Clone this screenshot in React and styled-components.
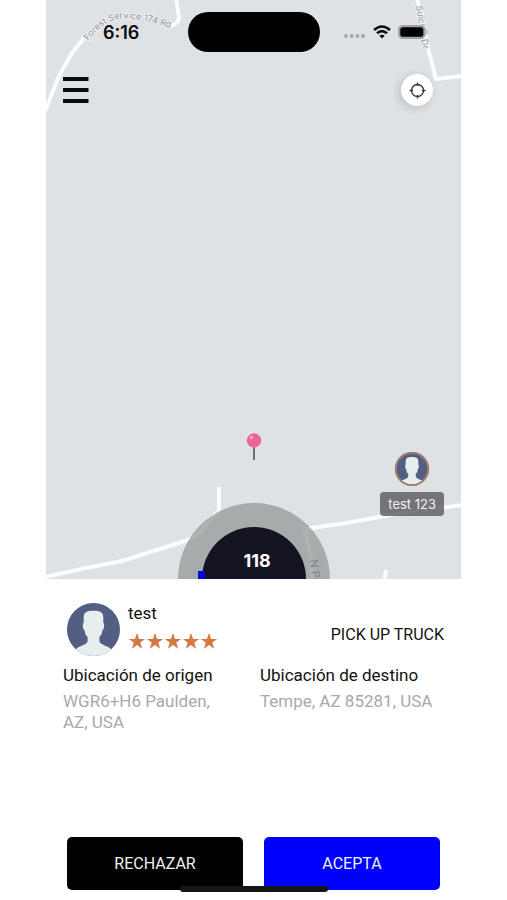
import React from 'react';
import styled, { createGlobalStyle } from 'styled-components';

const GlobalStyle = createGlobalStyle`
  * {
    box-sizing: border-box;
  }

  body {
    margin: 0;
    background-color: #fff;
    font-family: Roboto, 'Liberation Sans', sans-serif;
  }
`;

const Page = styled.main`
  display: flex;
  flex-direction: column;
  position: relative;
  min-height: 100vh;
  padding: 0 46px;
`;

const Map = styled.section`
  position: relative;
  flex: 1;
  overflow: hidden;
  background-color: #dee2e5;
`;

const Roads = styled.svg`
  position: absolute;
  inset: 0;
  width: 100%;
  height: 100%;
`;

const StatusBar = styled.div`
  position: relative;
  display: grid;
  grid-template-columns: 1fr 132px 1fr;
  align-items: center;
  padding-top: 12px;
`;

const Time = styled.div`
  padding-left: 57px;
  font-family: Inter, sans-serif;
  font-size: 18px;
  font-weight: 600;
  color: #0b0c10;
`;

const Island = styled.div`
  height: 40px;
  border-radius: 20px;
  background-color: #000;
`;

const StatusIcons = styled.div`
  display: flex;
  align-items: center;
  justify-content: flex-end;
  gap: 7px;
  padding-right: 32px;
`;

const TopBar = styled.div`
  position: relative;
  display: flex;
  align-items: center;
  justify-content: space-between;
  padding: 22px 28px 0 16px;
`;

const IconButton = styled.button`
  display: flex;
  align-items: center;
  justify-content: center;
  padding: 0;
  border: none;
  background: none;
  cursor: pointer;
`;

const LocateButton = styled(IconButton)`
  width: 32px;
  height: 32px;
  border-radius: 50%;
  background-color: #fff;
  box-shadow: -2px 2px 8px rgba(0, 0, 0, 0.16);
`;

const Pin = styled.svg`
  position: absolute;
  left: 50%;
  bottom: 118px;
  transform: translateX(-50%);
`;

const Driver = styled.div`
  position: absolute;
  right: 17px;
  bottom: 63px;
  display: flex;
  flex-direction: column;
  align-items: center;
  gap: 6px;
`;

const DriverLabel = styled.div`
  padding: 0 8px;
  border-radius: 4px;
  background-color: rgba(90, 92, 94, 0.82);
  color: #f1f1f1;
  font-family: Inter, sans-serif;
  font-size: 13px;
  line-height: 24px;
`;

const Dial = styled.div`
  position: absolute;
  left: 50%;
  bottom: -76px;
  width: 152px;
  height: 152px;
  padding: 24px;
  border-radius: 50%;
  background-color: rgba(146, 149, 150, 0.72);
  transform: translateX(-50%);
`;

const DialFace = styled.div`
  height: 100%;
  padding: 22px 0 0 7px;
  border-radius: 50%;
  background-color: #141321;
  color: #fff;
  font-family: Inter, sans-serif;
  font-size: 18px;
  font-weight: 700;
  line-height: 24px;
  text-align: center;
`;

const DialMark = styled.div`
  position: absolute;
  left: 20px;
  top: 68px;
  width: 7px;
  height: 8px;
  background-color: #0707e0;
`;

const Sheet = styled.section`
  padding: 24px 17px 10px;
`;

const Rider = styled.div`
  display: flex;
  align-items: center;
  padding-left: 4px;
`;

const RiderInfo = styled.div`
  flex: 1;
  padding-left: 8px;
`;

const Name = styled.div`
  font-size: 17px;
  line-height: 21px;
  color: #111;
`;

const Stars = styled.div`
  display: flex;
  margin-top: 8px;
  padding-bottom: 6px;
`;

const Service = styled.div`
  font-size: 16px;
  line-height: 24px;
  padding-top: 10px;
  color: #111;
`;

const Places = styled.div`
  display: grid;
  grid-template-columns: 1fr 1fr;
  gap: 13px;
  margin-top: 7px;
`;

const PlaceTitle = styled.h2`
  margin: 0;
  font-size: 17px;
  font-weight: 400;
  line-height: 24px;
  color: #111;
`;

const Address = styled.p`
  margin: 4px 0 0;
  padding-right: ${({ $inset }) => $inset || 0}px;
  font-size: 17px;
  line-height: 21px;
  color: #a9a9a9;
`;

const Actions = styled.div`
  display: grid;
  grid-template-columns: 1fr 1fr;
  gap: 21px;
  margin-top: 104px;
  padding: 0 4px;
`;

const ActionButton = styled.button`
  height: 53px;
  padding: 0;
  border: none;
  border-radius: 5px;
  background-color: ${({ $color }) => $color};
  color: #f0f0f0;
  font-family: inherit;
  font-size: 16px;
  cursor: pointer;
`;

const HomeIndicator = styled.div`
  position: absolute;
  left: 50%;
  bottom: 8px;
  width: 148px;
  height: 6px;
  border-radius: 3px;
  background-color: #161616;
  transform: translateX(-50%);
`;

function Avatar({ size, ring }) {
  const id = `avatar-${size}`;
  return (
    <svg width={size} height={size} viewBox="0 0 54 54" aria-hidden="true">
      <clipPath id={id}>
        <circle cx="27" cy="27" r="27" />
      </clipPath>
      <g clipPath={`url(#${id})`}>
        <rect width="54" height="54" fill="#525f83" />
        <path
          d="M27 8C20 8 17 9.500 17 15V20C15.500 20.500 16 27 18 28C18.300 31 19 33 21 34.500V39C20 42.500 14 43.500 10 46L6 50V54H48V50L44 46C40 43.500 34 42.500 33 39V34.500C35 33 35.700 31 36 28C38 27 38.500 20.500 37 20V15C37 9.500 34 8 27 8Z"
          fill="#e7eeee"
        />
      </g>
      {ring && <circle cx="27" cy="27" r="25.500" fill="none" stroke="#a07c65" strokeWidth="3" />}
    </svg>
  );
}

function Star() {
  return (
    <svg width="18" height="18" viewBox="0 0 18 18" aria-hidden="true">
      <path d="M9 1L11.100 6.900H17.200L12.300 10.600L14.100 16.700L9 13L3.900 16.700L5.700 10.600L.8 6.900H6.900Z" fill="#d27a43" />
    </svg>
  );
}

function MapRoads() {
  return (
    <Roads viewBox="0 0 415 579" preserveAspectRatio="xMidYMax slice">
      <g fill="none" stroke="#fbfcfc" strokeWidth="4" strokeLinejoin="round">
        <path d="M-1 111L13 76L26 53L38 38" />
        <path d="M130 -2L133 18Q132 24 125 26" />
        <path d="M371 -2L375 15L383 52L390 79L417 76" />
        <path d="M-1 577L40 568L76 561L142 540Q153 536 160 524L173 510V487" />
        <path d="M259 529L300 523L355 513L417 505" />
        <path d="M259 529L265 560L267 582" />
        <path d="M338 582L340 570" />
      </g>
      <path id="forest" d="M42 41Q56 22 72 19Q92 16 132 31" fill="none" />
      <path id="suicide" d="M370 6L378 56" fill="none" />
      <path id="north" d="M264 560L269 600" fill="none" />
      <g
        fill="#919296"
        stroke="#eff1f2"
        strokeWidth="2"
        paintOrder="stroke"
        fontFamily="Inter, sans-serif"
        fontSize="9"
      >
        <text><textPath href="#forest">Forest Service 174 Rd</textPath></text>
        <text><textPath href="#suicide">Suicide Dr</textPath></text>
      </g>
      <text fill="#55575a" fontFamily="Inter, sans-serif" fontSize="11">
        <textPath href="#north">N Pe</textPath>
      </text>
    </Roads>
  );
}

function App() {
  return (
    <>
      <GlobalStyle />
      <Page>
        <Map>
          <MapRoads />
          <StatusBar>
            <Time>6:16</Time>
            <Island />
            <StatusIcons>
              <svg width="22" height="18" viewBox="0 0 22 18" fill="#a3a5a8">
                <circle cx="2" cy="13" r="1.900" />
                <circle cx="7.700" cy="13" r="1.900" />
                <circle cx="13.400" cy="13" r="1.900" />
                <circle cx="19.100" cy="13" r="1.900" />
              </svg>
              <svg width="18" height="14" viewBox="0 0 18 14" fill="none" stroke="#0b0c10" strokeWidth="2.500">
                <path d="M1 5Q9 -2 17 5" />
                <path d="M4 8.300Q9 4 14 8.300" />
                <path d="M9 13.500L6.300 10.700Q9 8.700 11.700 10.700Z" fill="#0b0c10" stroke="none" />
              </svg>
              <svg width="31" height="14" viewBox="0 0 31 14">
                <rect x="0" y="0" width="27.500" height="14" rx="4.500" fill="#a0a2a4" />
                <rect x="2.300" y="2.200" width="23" height="9.600" rx="2.500" fill="#000" />
                <path d="M28.300 4.500Q31 7 28.300 9.500Z" fill="#a0a2a4" />
              </svg>
            </StatusIcons>
          </StatusBar>
          <TopBar>
            <IconButton aria-label="Menú">
              <svg width="27" height="26" viewBox="0 0 27 26" fill="#0b0c0e">
                <path d="M1 0H26.500V4H1ZM1 11H26.500V15H1ZM1 22H26.500V26H1Z" />
              </svg>
            </IconButton>
            <LocateButton aria-label="Mi ubicación">
              <svg width="17" height="17" viewBox="0 0 17 17" fill="none" stroke="#3c3c3c" strokeWidth="1.400">
                <circle cx="8.500" cy="8.500" r="6" />
                <path d="M8.500 .5V4M8.500 13V16.500M.5 8.500H4M13 8.500H16.500" />
              </svg>
            </LocateButton>
          </TopBar>
          <Pin width="16" height="29" viewBox="0 0 16 29" aria-hidden="true">
            <path d="M8 14V28" stroke="#6f7174" strokeWidth="2" />
            <circle cx="8" cy="8.500" r="7.200" fill="#ee6399" />
            <circle cx="5.500" cy="5.500" r="1.600" fill="#fbb5d0" />
          </Pin>
          <Driver>
            <Avatar size={34} ring />
            <DriverLabel>test 123</DriverLabel>
          </Driver>
          <Dial>
            <DialFace>118</DialFace>
            <DialMark />
          </Dial>
        </Map>
        <Sheet>
          <Rider>
            <Avatar size={53} />
            <RiderInfo>
              <Name>test</Name>
              <Stars role="img" aria-label="5 / 5">
                {[1, 2, 3, 4, 5].map(n => (
                  <Star key={n} />
                ))}
              </Stars>
            </RiderInfo>
            <Service>PICK UP TRUCK</Service>
          </Rider>
          <Places>
            <div>
              <PlaceTitle>Ubicación de origen</PlaceTitle>
              <Address $inset={24}>WGR6+H6 Paulden, AZ, USA</Address>
            </div>
            <div>
              <PlaceTitle>Ubicación de destino</PlaceTitle>
              <Address>Tempe, AZ 85281, USA</Address>
            </div>
          </Places>
          <Actions>
            <ActionButton $color="#000">RECHAZAR</ActionButton>
            <ActionButton $color="#0000fe">ACEPTA</ActionButton>
          </Actions>
        </Sheet>
        <HomeIndicator />
      </Page>
    </>
  );
}

export default App;
